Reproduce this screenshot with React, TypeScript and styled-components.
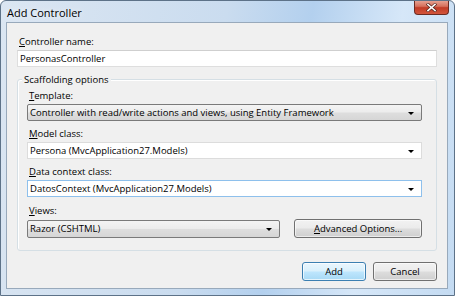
import React from "react";
import styled, { createGlobalStyle, css } from "styled-components";

const Global = createGlobalStyle`
  html, body { margin: 0; padding: 0; background: #fff; }
  body { font-family: "Open Sans", "Noto Sans", sans-serif; }
`;

const FONT = `"Open Sans", "Noto Sans", sans-serif`;

const Window = styled.div`
  width: 455px;
  height: 296px;
  box-sizing: border-box;
  display: flex;
  flex-direction: column;
  border: 1px solid #5d7288;
  border-radius: 6px 6px 0 0;
  background: linear-gradient(100deg, #dbe6f2 0%, #cadcef 45%, #b3d0ee 62%, #d6e7f8 80%, #c4dbf2 100%);
  padding: 0 6px 6px 5px;
  overflow: hidden;
`;

const TitleBar = styled.div`
  height: 21px;
  display: flex;
  align-items: flex-start;
  justify-content: space-between;
`;

const Title = styled.div`
  font-family: ${FONT};
  font-size: 11px;
  color: #000;
  padding: 4px 0 0 1px;
  text-shadow: 0 0 6px rgba(255, 255, 255, 0.9);
`;

const CloseButton = styled.div`
  width: 35px;
  height: 15px;
  margin-right: -1px;
  margin-top: -1px;
  box-sizing: border-box;
  border: 1px solid #6b2b22;
  border-top: none;
  border-radius: 0 0 4px 4px;
  background: linear-gradient(#e9a99a 0%, #d6705c 45%, #c13b26 55%, #d2553c 100%);
  display: flex;
  align-items: center;
  justify-content: center;
`;

const Client = styled.div`
  flex: 1;
  background: #f0f0f0;
  border: 1px solid #98a9bb;
  display: flex;
  flex-direction: column;
  padding: 11px 10px 0 10px;
  font-family: ${FONT};
  font-size: 9.5px;
  color: #000;
`;

const Label = styled.div`
  height: 16px;
  line-height: 16px;
  padding-left: ${(p: { $indent?: number }) => p.$indent ?? 2}px;
  white-space: nowrap;
`;

const Key = styled.span`
  text-decoration: underline;
  text-underline-offset: 1px;
`;

const TextBox = styled.div`
  height: 17px;
  box-sizing: border-box;
  background: #fff;
  border: 1px solid #dedede;
  border-top-color: #cfcfcf;
  padding-left: 2px;
  line-height: 15px;
  margin-top: 0px;
`;

const Group = styled.div`
  margin-top: 12px;
  position: relative;
  height: 172px;
  box-sizing: border-box;
  border: 1px solid #d5dfe5;
  border-radius: 3px;
  box-shadow: inset 1px 1px 0 #fff;
  padding: 8px 14px 0 9px;
  display: flex;
  flex-direction: column;
`;

const Legend = styled.div`
  position: absolute;
  top: -8px;
  left: 4px;
  padding: 0 2px;
  background: #f0f0f0;
  line-height: 16px;
`;

const Combo = styled.div<{ $variant: "button" | "edit" | "focus"; $width?: number }>`
  height: 17px;
  box-sizing: border-box;
  display: flex;
  align-items: center;
  justify-content: space-between;
  padding: 0 7px 0 2px;
  border-radius: 2px;
  ${(p) => (p.$width ? `width: ${p.$width}px;` : "")}
  ${(p) =>
    p.$variant === "button"
      ? css`
          border: 1px solid #7a7a7a;
          background: linear-gradient(#f4f4f4 0%, #ececec 48%, #dedede 52%, #d6d6d6 100%);
        `
      : p.$variant === "focus"
      ? css`
          border: 1px solid #8ec0ec;
          border-radius: 0;
          background: #fff;
        `
      : css`
          border: 1px solid #dcdcdc;
          border-radius: 0;
          background: #fff;
        `}
`;

const Arrow = styled.span`
  width: 0;
  height: 0;
  border-left: 3px solid transparent;
  border-right: 3px solid transparent;
  border-top: 3px solid #000;
  margin-top: 1px;
`;

const FieldGap = styled.div`
  height: ${(p: { $h: number }) => p.$h}px;
`;

const Row = styled.div`
  display: flex;
  align-items: center;
  gap: 14px;
`;

const Button = styled.div<{ $default?: boolean; $width: number }>`
  width: ${(p) => p.$width}px;
  height: 19px;
  box-sizing: border-box;
  border-radius: 3px;
  display: flex;
  align-items: center;
  justify-content: center;
  ${(p) =>
    p.$default
      ? css`
          border: 1px solid #3c7fb1;
          background: linear-gradient(#eaf6fd 0%, #d9f0fc 48%, #bee6fd 52%, #a7d9f5 100%);
          box-shadow: inset 0 0 0 1px rgba(255, 255, 255, 0.7);
        `
      : css`
          border: 1px solid #707070;
          background: linear-gradient(#f2f2f2 0%, #ebebeb 48%, #dddddd 52%, #cfcfcf 100%);
          box-shadow: inset 0 0 0 1px rgba(255, 255, 255, 0.6);
        `}
`;

const Footer = styled.div`
  margin-top: 11px;
  display: flex;
  justify-content: flex-end;
  gap: 7px;
`;

export default function App() {
  return (
    <>
      <Global />
      <Window>
        <TitleBar>
          <Title>Add Controller</Title>
          <CloseButton>
            <svg width="11" height="9" viewBox="0 0 11 9">
              <path d="M2 1.5 L9 7.5 M9 1.5 L2 7.5" stroke="#5a2a22" strokeWidth="3" strokeLinecap="square" />
              <path d="M2 1.5 L9 7.5 M9 1.5 L2 7.5" stroke="#ffffff" strokeWidth="1.6" strokeLinecap="square" />
            </svg>
          </CloseButton>
        </TitleBar>
        <Client>
          <Label>
            <Key>C</Key>ontroller name:
          </Label>
          <TextBox>PersonasController</TextBox>
          <Group>
            <Legend>Scaffolding options</Legend>
            <Label>
              <Key>T</Key>emplate:
            </Label>
            <Combo $variant="button">
              <span>Controller with read/write actions and views, using Entity Framework</span>
              <Arrow />
            </Combo>
            <FieldGap $h={5} />
            <Label>
              <Key>M</Key>odel class:
            </Label>
            <Combo $variant="edit">
              <span>Persona (MvcApplication27.Models)</span>
              <Arrow />
            </Combo>
            <FieldGap $h={5} />
            <Label>
              <Key>D</Key>ata context class:
            </Label>
            <Combo $variant="focus">
              <span>DatosContext (MvcApplication27.Models)</span>
              <Arrow />
            </Combo>
            <FieldGap $h={6} />
            <Label>
              <Key>V</Key>iews:
            </Label>
            <Row>
              <Combo $variant="button" $width={254} style={{ height: 18 }}>
                <span>Razor (CSHTML)</span>
                <Arrow />
              </Combo>
              <Button $width={128}>
                <span>
                  <Key>A</Key>dvanced Options...
                </span>
              </Button>
            </Row>
          </Group>
          <Footer>
            <Button $default $width={64}>Add</Button>
            <Button $width={64}>Cancel</Button>
          </Footer>
        </Client>
      </Window>
    </>
  );
}
